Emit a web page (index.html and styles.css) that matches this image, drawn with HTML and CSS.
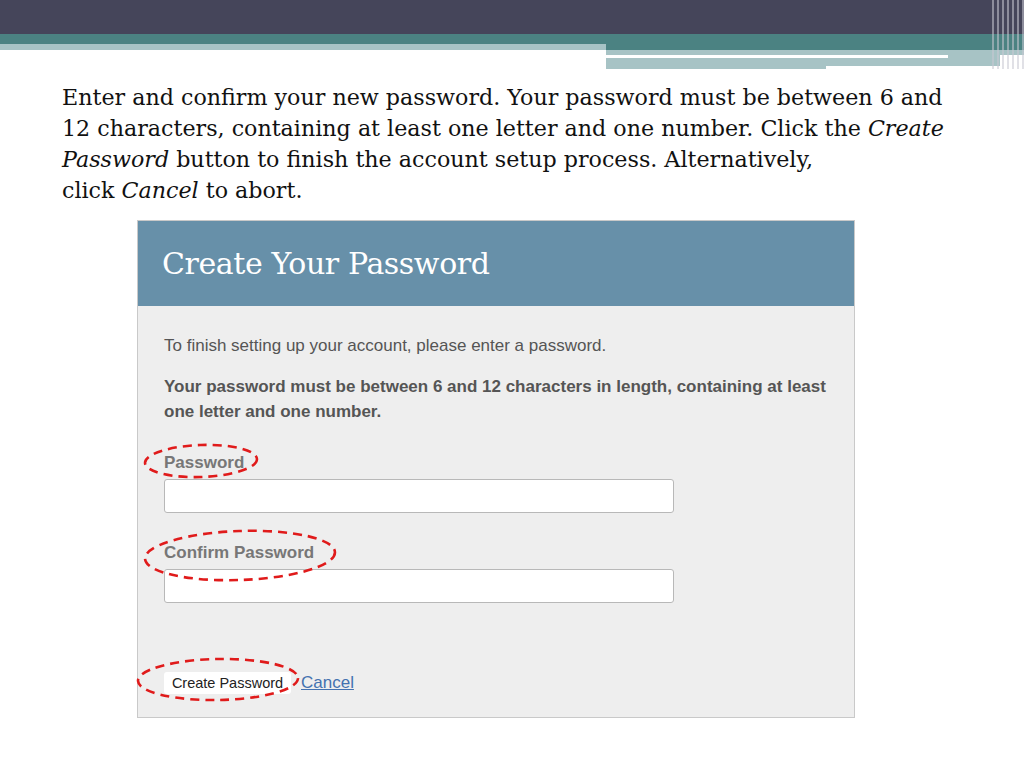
FILE: index.html
```html
<!DOCTYPE html>
<html lang="en">
<head>
    <meta charset="UTF-8">
    <meta name="viewport" content="width=device-width, initial-scale=1.0">
    <link rel="stylesheet" href="styles.css">
    <title>Create Your Password</title>
</head>
<body>
    <div class="slide-top">
        <div class="band-dark"></div>
        <div class="band-row">
            <div class="band-left">
                <div class="teal t-left"></div>
                <div class="pale p-left"></div>
            </div>
            <div class="band-right">
                <div class="teal t-right"></div>
                <div class="pale p-thin"></div>
                <div class="white-line-row">
                    <div class="white-line"></div>
                    <div class="pale p-line-end"></div>
                </div>
                <div class="pale-foot">
                    <div class="pale p-foot-a"></div>
                    <div class="pale p-foot-b"></div>
                </div>
            </div>
        </div>
        <div class="edge-stripes"></div>
    </div>

    <p class="intro">
        Enter and confirm your new password. Your password must be between 6 and<br>
        12 characters, containing at least one letter and one number. Click the <em>Create</em><br>
        <em>Password</em> button to finish the account setup process. Alternatively,<br>
        click <em>Cancel</em> to abort.
    </p>

    <div class="form-shot">
        <div class="form-head">
            <h1>Create Your Password</h1>
        </div>
        <div class="form-body">
            <p class="note">To finish setting up your account, please enter a password.</p>
            <p class="rule">Your password must be between 6 and 12 characters in length, containing at least one letter and one number.</p>

            <label class="field-label" for="pw">Password</label>
            <input class="field" type="password" id="pw">

            <label class="field-label second" for="pw2">Confirm Password</label>
            <input class="field" type="password" id="pw2">

            <div class="actions">
                <button class="btn">Create Password</button>
                <a class="cancel" href="#">Cancel</a>
            </div>
        </div>

        <!-- red callouts drawn over the screenshot -->
        <svg class="ring ring-pw" width="118" height="38" viewBox="0 0 118 38">
            <ellipse cx="59" cy="19" rx="56" ry="16" transform="rotate(-2 59 19)"/>
        </svg>
        <svg class="ring ring-confirm" width="196" height="55" viewBox="0 0 196 55">
            <ellipse cx="98" cy="27.5" rx="95" ry="24.5" transform="rotate(-2 98 27.5)"/>
        </svg>
        <svg class="ring ring-btn" width="166" height="47" viewBox="0 0 166 47">
            <ellipse cx="83" cy="23.5" rx="80" ry="20.5" transform="rotate(-1 83 23.5)"/>
        </svg>
    </div>
</body>
</html>
```

FILE: styles.css
```css
body {
    margin: 0;
    padding: 0;
    background-color: #ffffff;
    font-family: "DejaVu Serif", "Liberation Serif", serif;
}

/* slide header bands */
.slide-top {
    position: relative;
    height: 69px;
}

.band-dark {
    height: 34px;
    background-color: #45455a;
}

.band-row {
    display: flex;
    height: 35px;
}

.band-left {
    width: 606px;
}

.band-right {
    flex: 1;
}

.teal {
    background-color: #4b8282;
}

.pale {
    background-color: #a7c3c5;
}

.t-left {
    height: 10px;
}

.p-left {
    height: 6px;
}

.t-right {
    height: 16px;
}

.p-thin {
    height: 5px;
}

.white-line-row {
    display: flex;
    height: 3px;
}

.white-line {
    width: 342px;
    background-color: #ffffff;
}

.p-line-end {
    width: 52px;
}

.pale-foot {
    display: flex;
    align-items: flex-start;
}

.p-foot-a {
    width: 220px;
    height: 11px;
}

.p-foot-b {
    width: 174px;
    height: 8px;
}

.edge-stripes {
    position: absolute;
    top: 0;
    right: 0;
    width: 32px;
    height: 69px;
    background: repeating-linear-gradient(90deg,
        rgba(200, 200, 210, 0.55) 0px,
        rgba(200, 200, 210, 0.55) 2px,
        rgba(255, 255, 255, 0) 2px,
        rgba(255, 255, 255, 0) 5px);
}

/* intro text */
.intro {
    margin: 13px 0 0 62px;
    font-size: 22.2px;
    line-height: 31px;
    color: #111111;
}

/* screenshot of the form */
.form-shot {
    position: relative;
    width: 716px;
    height: 496px;
    margin: 14px 0 0 137px;
    border: 1px solid #c9c9c9;
    background-color: #eeeeee;
    font-family: "Liberation Sans", Arial, sans-serif;
}

.form-head {
    height: 85px;
    background-color: #6790a9;
    display: flex;
    align-items: center;
    padding-left: 24px;
}

.form-head h1 {
    margin: 0;
    font-family: "DejaVu Serif", "Liberation Serif", serif;
    font-weight: normal;
    font-size: 30px;
    color: #ffffff;
    letter-spacing: -0.4px;
}

.form-body {
    padding: 29px 26px 0 26px;
}

.note {
    margin: 0 0 17px 0;
    font-size: 17px;
    line-height: 22px;
    color: #555555;
}

.rule {
    margin: 0 0 29px 0;
    font-size: 17px;
    font-weight: bold;
    line-height: 25px;
    color: #555555;
}

.field-label {
    display: block;
    font-size: 17px;
    font-weight: bold;
    line-height: 20px;
    color: #777777;
    margin-bottom: 6px;
}

.field-label.second {
    margin-top: 30px;
}

.field {
    display: block;
    box-sizing: border-box;
    width: 510px;
    height: 34px;
    margin: 0;
    border: 1px solid #b8b8b8;
    border-radius: 3px;
    background-color: #ffffff;
}

.actions {
    display: flex;
    align-items: center;
    margin-top: 69px;
}

.btn {
    height: 22px;
    width: 127px;
    padding: 0;
    border: none;
    border-radius: 3px;
    background-color: #ffffff;
    font-family: "Liberation Sans", Arial, sans-serif;
    font-size: 14.5px;
    color: #222222;
}

.cancel {
    margin-left: 10px;
    font-size: 17px;
    color: #4472b0;
    text-decoration: underline;
}

/* dashed red callouts */
.ring {
    position: absolute;
    overflow: visible;
}

.ring ellipse {
    fill: none;
    stroke: #e01b1b;
    stroke-width: 2.6;
    stroke-dasharray: 9 6;
}

.ring-pw {
    left: 4px;
    top: 221px;
}

.ring-confirm {
    left: 4px;
    top: 307px;
}

.ring-btn {
    left: -3px;
    top: 435px;
}
```
